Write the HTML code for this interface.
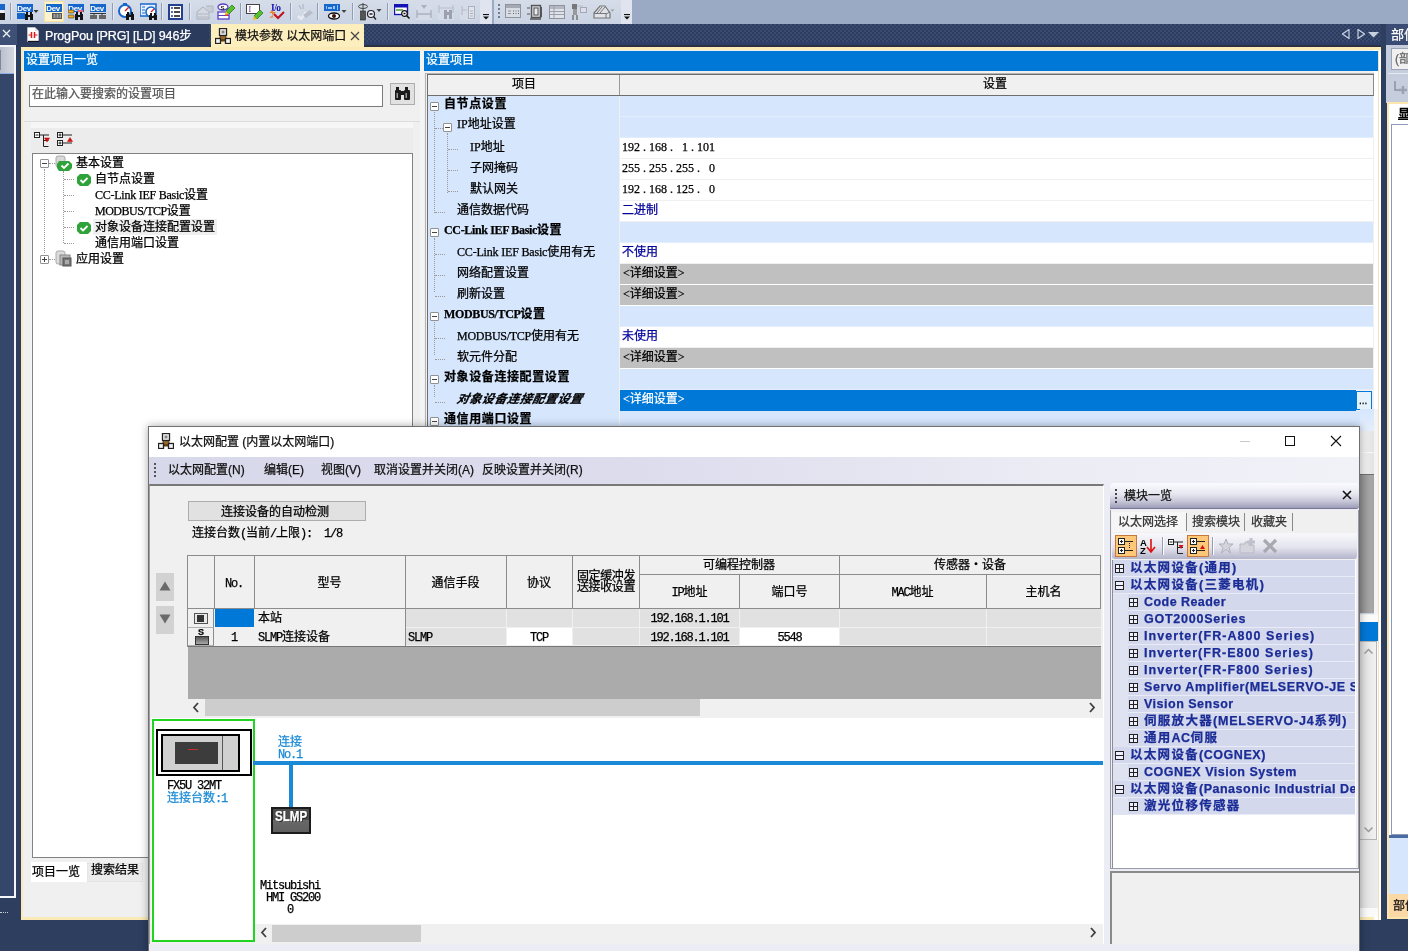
<!DOCTYPE html><html><head><meta charset="utf-8"><title>以太网配置</title><style>*{box-sizing:border-box;margin:0;padding:0}
html,body{width:1408px;height:951px;overflow:hidden}
body{position:relative;background:#2d3e5f;font-family:"Liberation Serif","Noto Sans CJK SC",serif;font-size:12px;color:#000;line-height:1}
.a{position:absolute}
.ui{font-family:"Liberation Sans","Noto Sans CJK SC",sans-serif}
.mono{font-family:"Liberation Mono","Noto Sans CJK SC",monospace}
.t{position:absolute;white-space:nowrap;line-height:14px;height:14px}
.b{font-weight:bold}
.hatch{background-color:#2c3c60;background-image:linear-gradient(45deg,#3a4b70 25%,transparent 25%,transparent 75%,#3a4b70 75%),linear-gradient(45deg,#3a4b70 25%,transparent 25%,transparent 75%,#3a4b70 75%);background-size:4px 4px;background-position:0 0,2px 2px}
.hdr{background:#0078d7;color:#fff}
.lab{background:#d5e6fd}
.gry{background:#c0c0c0}
.blu{color:#00009c}
.dots-h{border-top:1px dotted #9a9a9a;height:0}
.dots-v{border-left:1px dotted #9a9a9a;width:0}
.pm{width:9px;height:9px;border:1px solid #919191;background:#fff;border-radius:1px}
.pm:before{content:"";position:absolute;left:1px;top:3px;width:5px;height:1px;background:#444}
.pm.plus:after{content:"";position:absolute;left:3px;top:1px;width:1px;height:5px;background:#444}
.mrow{position:absolute;left:0;width:242px;height:17px;background:#d3d8ec;border-bottom:1px solid #e9ecf7}
.mt{position:absolute;white-space:nowrap;font-family:"Liberation Sans","Noto Sans CJK SC",sans-serif;font-weight:bold;color:#1b2c97;font-size:12.5px;line-height:16px;top:0;letter-spacing:0.45px}
.bx{position:absolute;width:9px;height:9px;border:1px solid #222;background:#eef}
.bx:before{content:"";position:absolute;left:0;top:3px;width:7px;height:1px;background:#222}
.bx.plus:after{content:"";position:absolute;left:3px;top:0;width:1px;height:7px;background:#222}

.cl{font-size:12px;letter-spacing:-0.35px}
.ml{letter-spacing:-1.2px}
#root{position:absolute;left:0;top:0;width:1408px;height:951px;overflow:hidden;will-change:transform;background:#2d3e5f}
.t,.mt{-webkit-text-stroke:0.25px currentColor}
</style></head><body><div id="root">
<div class="a" style="left:0;top:0;width:1408px;height:24px;background:#9aa9c4"></div>
<div class="a" style="left:0;top:0;width:492px;height:24px;background:linear-gradient(#d6dde9,#cad3e3)"></div>
<div class="a" style="left:480px;top:0;width:12px;height:24px;background:#dfe4ee"></div>
<div class="a" style="left:494px;top:0;width:138px;height:24px;background:linear-gradient(#d6dde9,#cad3e3)"></div>
<div class="a" style="left:621px;top:0;width:11px;height:24px;background:#dfe4ee"></div>
<div class="a" style="left:10px;top:3px;width:1px;height:17px;background:#8f9cb5"></div>
<div class="a" style="left:11px;top:3px;width:1px;height:17px;background:#e4e9f2"></div>
<div class="a" style="left:112px;top:3px;width:1px;height:17px;background:#8f9cb5"></div>
<div class="a" style="left:113px;top:3px;width:1px;height:17px;background:#e4e9f2"></div>
<div class="a" style="left:161px;top:3px;width:1px;height:17px;background:#8f9cb5"></div>
<div class="a" style="left:162px;top:3px;width:1px;height:17px;background:#e4e9f2"></div>
<div class="a" style="left:189px;top:3px;width:1px;height:17px;background:#8f9cb5"></div>
<div class="a" style="left:190px;top:3px;width:1px;height:17px;background:#e4e9f2"></div>
<div class="a" style="left:240px;top:3px;width:1px;height:17px;background:#8f9cb5"></div>
<div class="a" style="left:241px;top:3px;width:1px;height:17px;background:#e4e9f2"></div>
<div class="a" style="left:290px;top:3px;width:1px;height:17px;background:#8f9cb5"></div>
<div class="a" style="left:291px;top:3px;width:1px;height:17px;background:#e4e9f2"></div>
<div class="a" style="left:317px;top:3px;width:1px;height:17px;background:#8f9cb5"></div>
<div class="a" style="left:318px;top:3px;width:1px;height:17px;background:#e4e9f2"></div>
<div class="a" style="left:352px;top:3px;width:1px;height:17px;background:#8f9cb5"></div>
<div class="a" style="left:353px;top:3px;width:1px;height:17px;background:#e4e9f2"></div>
<div class="a" style="left:387px;top:3px;width:1px;height:17px;background:#8f9cb5"></div>
<div class="a" style="left:388px;top:3px;width:1px;height:17px;background:#e4e9f2"></div>
<svg class="a" style="left:0px;top:4px" width="6" height="16" viewBox="0 0 6 16"><rect x="0" y="0" width="5" height="6" fill="#1766cc"/><rect x="0" y="6" width="4" height="3" fill="#eee"/><rect x="0" y="9" width="5" height="7" fill="#1a1a1a"/></svg>
<svg class="a" style="left:17px;top:4px" width="22" height="16" viewBox="0 0 22 16"><rect x="0" y="0" width="16" height="8" fill="#1766cc"/><text x="0.3" y="7" font-family="Liberation Sans" font-weight="bold" font-size="8" fill="#fff" letter-spacing="-0.4">Dev</text><rect x="0" y="9" width="8" height="6" fill="#1766cc"/><g fill="#141414" transform="translate(8,8)"><rect x="0" y="2" width="3" height="6"/><rect x="5" y="2" width="3" height="6"/><rect x="1" y="0" width="2" height="3"/><rect x="5" y="0" width="2" height="3"/><rect x="2" y="3" width="4" height="2"/></g><path d="M16.500 6h5l-2.500 3z" fill="#333"/></svg>
<div class="a" style="left:44px;top:1px;width:20px;height:21px;background:#fdf3cf;border:1px solid #f5e1a0"></div>
<svg class="a" style="left:46px;top:4px" width="16" height="16" viewBox="0 0 16 16"><rect x="0" y="0" width="16" height="8" fill="#1766cc"/><text x="0.3" y="7" font-family="Liberation Sans" font-weight="bold" font-size="8" fill="#fff" letter-spacing="-0.4">Dev</text><rect x="6" y="9" width="10" height="6" fill="#555"/><path d="M7.500 10.500h2v1h-2zM10.500 10.500h2v1h-2zM13.500 10.500h1.500v1h-1.500zM7.500 12.500h2v1h-2zM10.500 12.500h2v1h-2zM13.500 12.500h1.500v1h-1.500z" fill="#eee"/></svg>
<svg class="a" style="left:68px;top:4px" width="16" height="16" viewBox="0 0 16 16"><rect x="0" y="0" width="16" height="8" fill="#1766cc"/><text x="0.3" y="7" font-family="Liberation Sans" font-weight="bold" font-size="8" fill="#fff" letter-spacing="-0.4">Dev</text><rect x="0" y="6" width="6" height="3" rx="1" fill="#f0b020" stroke="#333" stroke-width="0.6"/><rect x="0" y="11" width="6" height="3" rx="1" fill="#f0b020" stroke="#333" stroke-width="0.6"/><rect x="10" y="6" width="5" height="2" fill="#f06070"/><g fill="#141414" transform="translate(7,8)"><rect x="0" y="2" width="3" height="6"/><rect x="5" y="2" width="3" height="6"/><rect x="1" y="0" width="2" height="3"/><rect x="5" y="0" width="2" height="3"/><rect x="2" y="3" width="4" height="2"/></g></svg>
<svg class="a" style="left:90px;top:4px" width="16" height="16" viewBox="0 0 16 16"><rect x="0" y="0" width="16" height="8" fill="#1766cc"/><text x="0.3" y="7" font-family="Liberation Sans" font-weight="bold" font-size="8" fill="#fff" letter-spacing="-0.4">Dev</text><path d="M0 9.500h16M4 9.500v2M12 9.500v2" stroke="#333"/><rect x="0" y="11" width="7" height="4" fill="#666"/><rect x="9" y="11" width="7" height="4" fill="#666"/></svg>
<svg class="a" style="left:118px;top:3px" width="17" height="17" viewBox="0 0 17 17"><circle cx="7" cy="8" r="6" fill="#fff" stroke="#1766cc" stroke-width="2"/><rect x="5" y="0" width="4" height="2" fill="#1766cc"/><path d="M7 8l4-4" stroke="#e02020" stroke-width="1.4"/><g fill="#141414" transform="translate(8,9)"><rect x="0" y="2" width="3" height="6"/><rect x="5" y="2" width="3" height="6"/><rect x="1" y="0" width="2" height="3"/><rect x="5" y="0" width="2" height="3"/><rect x="2" y="3" width="4" height="2"/></g></svg>
<svg class="a" style="left:140px;top:3px" width="18" height="17" viewBox="0 0 18 17"><rect x="0" y="1" width="16" height="12" fill="#e8f0ff" stroke="#1766cc" stroke-width="1.5"/><path d="M2 4h3M2 7h3M2 10h3" stroke="#1766cc"/><circle cx="11" cy="9" r="5" fill="#fff" stroke="#1766cc" stroke-width="1.6"/><path d="M11 9l3-3" stroke="#e02020" stroke-width="1.3"/><g fill="#141414" transform="translate(9,10)"><rect x="0" y="2" width="3" height="6"/><rect x="5" y="2" width="3" height="6"/><rect x="1" y="0" width="2" height="3"/><rect x="5" y="0" width="2" height="3"/><rect x="2" y="3" width="4" height="2"/></g></svg>
<svg class="a" style="left:168px;top:4px" width="16" height="16" viewBox="0 0 16 16"><rect x="1" y="1" width="13" height="14" fill="#fff" stroke="#24408e" stroke-width="2"/><path d="M3 4h2M3 8h2M3 12h2" stroke="#24408e" stroke-width="1.4"/><path d="M6 4h6M6 8h6M6 12h6" stroke="#111" stroke-width="1.4"/></svg>
<svg class="a" style="left:196px;top:4px" width="18" height="16" viewBox="0 0 18 16"><path d="M1 15v-7l6-5l6 5v7z" fill="#d4d8e0" stroke="#a8aebc"/><path d="M10 2h7v6h-5" fill="#c8ccd6" stroke="#b0b6c2"/><path d="M2 10h10M2 13h10" stroke="#b0b6c2"/></svg>
<svg class="a" style="left:217px;top:3px" width="19" height="18" viewBox="0 0 19 18"><ellipse cx="6" cy="4" rx="5" ry="3" fill="#fff" stroke="#5a3ec8" stroke-width="1.3"/><text x="3.500" y="6.500" font-family="Liberation Sans" font-weight="bold" font-size="6" fill="#222">S</text><rect x="1" y="9" width="11" height="7" fill="#fff" stroke="#5a3ec8" stroke-width="1.3"/><path d="M1 12.500h11" stroke="#5a3ec8"/><path d="M8 11h3v2h-3z" fill="#e03030"/><path d="M9 8l6-6l3 3l-6 6z" fill="#58c030" stroke="#2a7a18" stroke-width="0.8"/><path d="M9 8l-1 4l4-1z" fill="#e8c020"/></svg>
<svg class="a" style="left:246px;top:4px" width="18" height="17" viewBox="0 0 18 17"><rect x="0.500" y="0.500" width="13" height="9" fill="#fff" stroke="#444"/><text x="2.500" y="8" font-family="Liberation Serif" font-size="8" fill="#5a2a8a">I</text><path d="M8 12l6-6l3 3l-6 6z" fill="#58c030" stroke="#2a7a18" stroke-width="0.8"/><path d="M8 12l-1 4l4-1z" fill="#e8c020"/></svg>
<svg class="a" style="left:268px;top:3px" width="18" height="18" viewBox="0 0 18 18"><text x="3" y="8" font-family="Liberation Serif" font-weight="bold" font-size="9.500" fill="#1010b0" letter-spacing="-0.5">I/o</text><path d="M1 10l4-3v2h3l-4 3v-2z" fill="#f08030"/><path d="M1 15l4-3v2h2" fill="#f08030"/><path d="M6 11l4 4l6-6" stroke="#c01020" stroke-width="2" fill="none"/></svg>
<svg class="a" style="left:296px;top:4px" width="18" height="16" viewBox="0 0 18 16"><path d="M3 1l2 4M7 0v5" stroke="#aab0be"/><path d="M2 12l3 3l5-7" stroke="#e8ecf2" stroke-width="2.500" fill="none"/><path d="M7 11l7-5l3 3l-7 5z" fill="#b8bdc9"/></svg>
<svg class="a" style="left:324px;top:4px" width="24" height="17" viewBox="0 0 24 17"><rect x="0" y="0" width="16" height="7" fill="#1766cc"/><path d="M2 2h1v3h-1zM4 3h4v2h-4zM9 2h2v3h-2zM13 1h1v5h-1z" fill="#9cc4ff"/><ellipse cx="10" cy="12" rx="5.500" ry="3" fill="#fff" stroke="#111" stroke-width="1.300"/><circle cx="10" cy="12" r="2" fill="#3a1010"/><path d="M17.500 6h5l-2.500 3z" fill="#444"/></svg>
<svg class="a" style="left:358px;top:3px" width="24" height="18" viewBox="0 0 24 18"><ellipse cx="5" cy="3.500" rx="4.500" ry="2" fill="none" stroke="#444"/><path d="M5 0v8" stroke="#444"/><rect x="2.500" y="8" width="5" height="9" fill="#555" stroke="#222" stroke-width="0.6"/><circle cx="13" cy="11" r="3.500" fill="#eef" stroke="#222" stroke-width="1.200"/><path d="M11.500 11h3M15.500 13.500l2.500 3" stroke="#222" stroke-width="1.300"/><path d="M18.500 6h5l-2.500 3z" fill="#444"/></svg>
<svg class="a" style="left:394px;top:4px" width="18" height="16" viewBox="0 0 18 16"><rect x="0.500" y="0.500" width="13" height="10" fill="#fff" stroke="#1414b4" stroke-width="1.400"/><rect x="0" y="0" width="14" height="3.500" fill="#1414b4"/><path d="M2 6h7" stroke="#58a040" stroke-width="1.600"/><circle cx="10.500" cy="9.500" r="2.800" fill="#fff" stroke="#111" stroke-width="1.200"/><path d="M9.500 9.500h2M12.500 11.500l3 3" stroke="#111" stroke-width="1.500"/></svg>
<svg class="a" style="left:416px;top:4px" width="16" height="16" viewBox="0 0 16 16"><rect x="0" y="0" width="16" height="16" fill="#d5dce8"/><path d="M1 6v8M15 6v8M1 10h14" stroke="#aab0be" stroke-width="1.400"/><path d="M5 1h6l-3 4z" fill="#aab0be"/></svg>
<svg class="a" style="left:438px;top:4px" width="17" height="16" viewBox="0 0 17 16"><rect x="0" y="0" width="16" height="16" fill="#d5dce8"/><path d="M1 1v8M15 1v8M1 4h14" stroke="#b8bdc9" stroke-width="1.200"/><g fill="#9aa0ae"><rect x="6" y="6" width="3" height="9"/><rect x="11" y="6" width="3" height="9"/><rect x="8" y="8" width="4" height="3"/></g></svg>
<svg class="a" style="left:460px;top:4px" width="16" height="16" viewBox="0 0 16 16"><rect x="0" y="0" width="16" height="16" fill="#d5dce8"/><path d="M2 2v9M2 6h5" stroke="#b8bdc9" stroke-width="1.200"/><rect x="8.500" y="2.500" width="6" height="12" fill="#e0e4ec" stroke="#aab0be"/><path d="M10 7h3M10 9.500h3M10 12h3" stroke="#aab0be"/></svg>
<svg class="a" style="left:483px;top:14px" width="6" height="6" viewBox="0 0 6 6"><path d="M0 0.500h6" stroke="#111" stroke-width="1.200"/><path d="M0 2.500h6l-3 3z" fill="#111"/></svg>
<svg class="a" style="left:624px;top:14px" width="6" height="6" viewBox="0 0 6 6"><path d="M0 0.500h6" stroke="#111" stroke-width="1.200"/><path d="M0 2.500h6l-3 3z" fill="#111"/></svg>
<div class="a" style="left:498px;top:4px;width:2px;height:2px;background:#6f7c96"></div>
<div class="a" style="left:498px;top:8px;width:2px;height:2px;background:#6f7c96"></div>
<div class="a" style="left:498px;top:12px;width:2px;height:2px;background:#6f7c96"></div>
<div class="a" style="left:498px;top:16px;width:2px;height:2px;background:#6f7c96"></div>
<svg class="a" style="left:505px;top:4px" width="17" height="15" viewBox="0 0 17 15"><rect x="0.500" y="0.500" width="15" height="13" fill="#d8dce4" stroke="#8e939e"/><rect x="1" y="1" width="14" height="3" fill="#a4a9b4"/><path d="M3 7h3M3 9.500h3" stroke="#8e939e"/><path d="M8 7h1M10.500 7h1M13 7h1M8 9.500h1M10.500 9.500h1M13 9.500h1" stroke="#666"/></svg>
<svg class="a" style="left:527px;top:4px" width="17" height="16" viewBox="0 0 17 16"><rect x="4.500" y="1.500" width="9" height="12" fill="#d0d4dc" stroke="#555" stroke-width="1.400"/><rect x="7" y="4" width="4" height="7" fill="#eee" stroke="#555"/><path d="M0 4h3M0 10h3M14.500 3v10" stroke="#555"/><path d="M3 15h11" stroke="#555" stroke-width="1.500"/></svg>
<svg class="a" style="left:549px;top:5px" width="16" height="14" viewBox="0 0 16 14"><rect x="0.500" y="0.500" width="15" height="13" fill="#dfe2e8" stroke="#8e939e"/><rect x="1" y="1" width="14" height="3" fill="#b4b8c2"/><path d="M1 6.500h14M1 9.500h14M5 1v12" stroke="#9a9faa"/></svg>
<svg class="a" style="left:571px;top:3px" width="18" height="17" viewBox="0 0 18 17"><rect x="1" y="1" width="5" height="5" fill="#777"/><rect x="2" y="6" width="4" height="6" fill="#999"/><path d="M2 12v5M6 12v5" stroke="#777" stroke-width="1.500"/><rect x="9.500" y="4.500" width="6" height="5" fill="#dde" stroke="#a4a9b4"/><path d="M6 3h6" stroke="#b8bdc9"/></svg>
<svg class="a" style="left:593px;top:4px" width="22" height="15" viewBox="0 0 22 15"><path d="M1 9l6-7h5l5 7v5h-16z" fill="#dfe2e8" stroke="#777" stroke-width="1.200"/><path d="M4 9l5-6M7 9l5-6M1 9.500h12v4.500" fill="none" stroke="#777"/><path d="M13 10l4-2" stroke="#777"/><path d="M17.500 5.500h4l-2 2z" fill="#999"/></svg>
<div class="a hatch" style="left:0;top:24px;width:1408px;height:18px"></div>
<div class="a" style="left:0;top:42px;width:1408px;height:4px;background:#2d3f68"></div>
<div class="a" style="left:0;top:45px;width:1408px;height:2px;background:#2a3140"></div>
<div class="a" style="left:0;top:24px;width:17px;height:21px;background:#3f5076"></div>
<svg class="a" style="left:2px;top:29px" width="9" height="9" viewBox="0 0 9 9"><path d="M1 1l7 7M8 1l-7 7" stroke="#eef1f7" stroke-width="1.300"/></svg>
<div class="a" style="left:17px;top:24px;width:192px;height:23px;background:#2b3b5e"></div>
<svg class="a" style="left:27px;top:27px" width="12" height="15" viewBox="0 0 12 15"><path d="M0.500 0.500h7.500l3.500 3.500v10.500h-11z" fill="#fff" stroke="#ddd" stroke-width="0.500"/><path d="M8 0.500v3.500h3.500" fill="#ddd"/><path d="M1.500 8h2.500M8 8h2.500" stroke="#e01818" stroke-width="1.200"/><path d="M4.500 5v6M7.500 5v6" stroke="#e01818" stroke-width="1.500"/><path d="M1 14.500h11" stroke="#111" stroke-width="1.300"/></svg>
<div class="t ui" style="left:45px;top:28px;color:#fff;font-size:12.5px;line-height:16px;letter-spacing:-0.12px">ProgPou [PRG] [LD] 946步</div>
<div class="a" style="left:211px;top:24px;width:153px;height:24px;background:#fdeebd"></div>
<svg class="a" style="left:215px;top:28px" width="16" height="16" viewBox="0 0 16 16"><path d="M4 13L6 6h4l2 7z" fill="#9a6a2a" stroke="#5a3a10"/><rect x="4.500" y="0.500" width="7" height="7" fill="#f4f4f4" stroke="#222" stroke-width="1.300"/><rect x="6.500" y="2.500" width="3" height="3" fill="#888"/><path d="M3 12h10" stroke="#5a3a10" stroke-width="1.500"/><rect x="0.500" y="10.500" width="5" height="5" fill="#f4f4f4" stroke="#222" stroke-width="1.300"/><rect x="10.500" y="10.500" width="5" height="5" fill="#f4f4f4" stroke="#222" stroke-width="1.300"/></svg>
<div class="t ui" style="left:235px;top:28px;color:#111;font-size:12px;line-height:16px">模块参数 以太网端口</div>
<svg class="a" style="left:350px;top:31px" width="10" height="10" viewBox="0 0 10 10"><path d="M1 1l8 8M9 1l-8 8" stroke="#444" stroke-width="1.200"/></svg>
<svg class="a" style="left:1342px;top:29px" width="8" height="10" viewBox="0 0 8 10"><path d="M7 0.500v9l-6.500-4.500z" fill="none" stroke="#c8d0e0" stroke-width="1.200"/></svg>
<svg class="a" style="left:1357px;top:29px" width="8" height="10" viewBox="0 0 8 10"><path d="M1 0.500v9l6.500-4.500z" fill="none" stroke="#c8d0e0" stroke-width="1.200"/></svg>
<svg class="a" style="left:1368px;top:32px" width="12" height="6" viewBox="0 0 12 6"><path d="M0 0h11l-5.500 5.500z" fill="#c8d0e0"/></svg>
<div class="a" style="left:21px;top:47px;width:1360px;height:873px;background:#f9eab6"></div>
<div class="a" style="left:23px;top:50px;width:1356px;height:867px;background:#f0f0f0"></div>
<div class="a" style="left:1374px;top:50px;width:7px;height:870px;background:#fff"></div>
<div class="a" style="left:1378px;top:50px;width:1px;height:870px;background:#f3e3bd"></div>
<div class="a" id="leftpanel" style="left:24px;top:51px;width:396px;height:866px;background:#f0f0f0">
 <div class="a hdr" style="left:0;top:0;width:396px;height:20px"></div>
 <div class="t" style="left:2px;top:2px;color:#fff;font-size:12px">设置项目一览</div>
 <div class="a" style="left:5px;top:34px;width:354px;height:22px;background:#fff;border:1px solid #7a7a7a"></div>
 <div class="t" style="left:8px;top:36px;color:#555;font-size:12px">在此输入要搜索的设置项目</div>
 <div class="a" style="left:366px;top:32px;width:25px;height:22px;background:#e1e1e1;border:1px solid #adadad"></div>
 <svg class="a" style="left:370px;top:35px" width="17" height="15" viewBox="0 0 17 15"><g fill="#1a1a1a"><rect x="2" y="1" width="3" height="4"/><rect x="11" y="1" width="3" height="4"/><rect x="1" y="4" width="6" height="10" rx="1"/><rect x="10" y="4" width="6" height="10" rx="1"/><rect x="6" y="5" width="5" height="4"/></g><rect x="2.5" y="7" width="1.5" height="5" fill="#999"/><rect x="11.5" y="7" width="1.5" height="5" fill="#999"/></svg>
 <div class="a" style="left:0;top:70px;width:396px;height:1px;background:#dcdcdc"></div>
 <div class="a" style="left:7px;top:71px;width:382px;height:718px;background:#f6f6f6"></div>
 <div class="a" style="left:7px;top:77px;width:382px;height:25px;background:#ececec"></div>
 <!-- tree toolbar icons -->
 <svg class="a" style="left:10px;top:81px" width="16" height="15" viewBox="0 0 16 15" fill="none" stroke="#222" stroke-width="1"><rect x="0.5" y="0.5" width="5" height="5" fill="#fff"/><path d="M1.5 3h3M6 3h9M9.5 3v11.5M9.5 8.5h5M9.5 14.5h5"/><path d="M10.5 6h5l-2.5 4z" fill="#d01010" stroke="#d01010" stroke-width="0.6"/></svg>
 <svg class="a" style="left:33px;top:81px" width="16" height="15" viewBox="0 0 16 15" fill="none" stroke="#222" stroke-width="1"><rect x="0.5" y="0.5" width="5" height="5" fill="#fff"/><rect x="0.5" y="8.5" width="5" height="5" fill="#fff"/><path d="M1.5 3h3M3 1.5v3M1.5 11h3M3 9.5v3M6 3h9M6 11h9"/><path d="M10.5 9.5h5l-2.5 -4z" fill="#d01010" stroke="#d01010" stroke-width="0.6"/></svg>
 <div class="a" style="left:8px;top:102px;width:381px;height:705px;background:#fff;border:1px solid #828282"></div>
 <!-- tree -->
 <div class="a dots-v" style="left:20px;top:118px;height:84px"></div>
 <div class="a dots-v" style="left:39px;top:120px;height:72px"></div>
 <div class="a dots-h" style="left:25px;top:112px;width:8px"></div>
 <div class="a dots-h" style="left:25px;top:208px;width:8px"></div>
 <div class="a pm" style="left:16px;top:108px"></div>
 <div class="a pm plus" style="left:16px;top:204px"></div>
 <div class="a dots-h" style="left:40px;top:128px;width:10px"></div>
 <div class="a dots-h" style="left:40px;top:144px;width:10px"></div>
 <div class="a dots-h" style="left:40px;top:160px;width:10px"></div>
 <div class="a dots-h" style="left:40px;top:176px;width:10px"></div>
 <div class="a dots-h" style="left:40px;top:192px;width:10px"></div>
 <!-- icons -->
 <svg class="a" style="left:31px;top:104px" width="18" height="17" viewBox="0 0 18 17"><rect x="1" y="1" width="9" height="11" rx="2" fill="#d9d9d9" stroke="#aaa"/><path d="M4 6h10l3 3v4l-3 3h-10l-2-3v-4z" fill="#2fa339"/><path d="M6.5 10.5l2.5 2.5l4.5-4.5" stroke="#fff" stroke-width="1.8" fill="none"/></svg>
 <svg class="a" style="left:53px;top:122px" width="14" height="14" viewBox="0 0 14 14"><path d="M3 1h8l3 3v6l-3 3h-8l-3-3v-6z" fill="#2fa339"/><path d="M3.5 7l2.5 2.5l4.5-4.5" stroke="#fff" stroke-width="1.8" fill="none"/></svg>
 <svg class="a" style="left:53px;top:170px" width="14" height="14" viewBox="0 0 14 14"><path d="M3 1h8l3 3v6l-3 3h-8l-3-3v-6z" fill="#2fa339"/><path d="M3.5 7l2.5 2.5l4.5-4.5" stroke="#fff" stroke-width="1.8" fill="none"/></svg>
 <svg class="a" style="left:31px;top:199px" width="18" height="18" viewBox="0 0 18 18"><rect x="1" y="1" width="9" height="13" rx="2" fill="#dcdcdc" stroke="#aaa"/><rect x="5" y="5" width="10" height="10" fill="#b8b8b8" stroke="#888"/><rect x="8" y="8" width="8" height="8" fill="#777" stroke="#555"/><rect x="10" y="10" width="4" height="4" fill="#aaa"/></svg>
 <div class="a" style="left:69px;top:168px;width:124px;height:16px;background:#efefef"></div>
 <div class="t" style="left:52px;top:105px">基本设置</div>
 <div class="t" style="left:71px;top:121px">自节点设置</div>
 <div class="t" style="left:71px;top:137px"><span style="letter-spacing:-0.25px">CC-Link IEF Basic</span>设置</div>
 <div class="t" style="left:71px;top:153px"><span style="letter-spacing:-0.5px">MODBUS/TCP</span>设置</div>
 <div class="t" style="left:71px;top:169px">对象设备连接配置设置</div>
 <div class="t" style="left:71px;top:185px">通信用端口设置</div>
 <div class="t" style="left:52px;top:201px">应用设置</div>
 <!-- bottom tabs -->
 <div class="a" style="left:7px;top:811px;width:56px;height:20px;background:#fff"></div>
 <div class="a" style="left:63px;top:812px;width:56px;height:19px;background:#ebebeb;border:1px dotted #ddd"></div>
 <div class="t" style="left:8px;top:814px;font-size:12px">项目一览</div>
 <div class="t" style="left:67px;top:812px;font-size:12px">搜索结果</div>
</div>
<!-- gap between panels -->
<div class="a" style="left:420px;top:51px;width:4px;height:866px;background:#f4f4f4"></div>

<div class="a" id="rightpanel" style="left:424px;top:51px;width:950px;height:866px;background:#f0f0f0">
<div class="a hdr" style="left:0;top:0;width:954px;height:20px"></div>
<div class="t" style="left:2px;top:2px;color:#fff;font-size:12px">设置项目</div>
<div class="a" style="left:1px;top:22px;width:949px;height:845px;border-left:1px solid #b4b4b4;border-top:1px solid #b4b4b4"></div>
<div class="a" style="left:3px;top:23px;width:947px;height:844px;border-left:1px solid #6e6e6e;border-top:1px solid #6e6e6e"></div>
<div class="a" style="left:4px;top:24px;width:946px;height:21px;background:#f0f0f0;border-bottom:1px solid #6e6e6e;border-right:1px solid #8a8a8a"></div>
<div class="a" style="left:195px;top:24px;width:1px;height:20px;background:#9a9a9a"></div>
<div class="t" style="left:88px;top:26px;font-size:12px">项目</div>
<div class="t" style="left:559px;top:26px;font-size:12px">设置</div>
<div class="a lab" style="left:4px;top:45px;width:191px;height:21px"></div>
<div class="a" style="left:196px;top:45px;width:753px;height:21px;background:#d5e6fd;border-bottom:1px solid #e2edfe"></div>
<div class="a pm" style="left:6px;top:51px"></div>
<div class="t b" style="left:20px;top:46px;letter-spacing:0.6px">自节点设置</div>
<div class="a lab" style="left:4px;top:66px;width:191px;height:21px"></div>
<div class="a" style="left:196px;top:66px;width:753px;height:21px;background:#d5e6fd;border-bottom:1px solid #e2edfe"></div>
<div class="a dots-h" style="left:11px;top:77px;width:8px"></div>
<div class="a pm" style="left:19px;top:72px"></div>
<div class="t" style="left:33px;top:66px">IP地址设置</div>
<div class="a lab" style="left:4px;top:87px;width:191px;height:21px"></div>
<div class="a" style="left:196px;top:87px;width:753px;height:21px;background:#fff;border-bottom:1px solid #f0f0f0"></div>
<div class="t" style="left:198px;top:89px;color:#000">192 . 168 .&nbsp;&nbsp;&nbsp;1 . 101</div>
<div class="a dots-h" style="left:24px;top:98px;width:10px"></div>
<div class="t" style="left:46px;top:89px">IP地址</div>
<div class="a lab" style="left:4px;top:108px;width:191px;height:21px"></div>
<div class="a" style="left:196px;top:108px;width:753px;height:21px;background:#fff;border-bottom:1px solid #f0f0f0"></div>
<div class="t" style="left:198px;top:110px;color:#000">255 . 255 . 255 .&nbsp;&nbsp;&nbsp;0</div>
<div class="a dots-h" style="left:24px;top:119px;width:10px"></div>
<div class="t" style="left:46px;top:110px">子网掩码</div>
<div class="a lab" style="left:4px;top:129px;width:191px;height:21px"></div>
<div class="a" style="left:196px;top:129px;width:753px;height:21px;background:#fff;border-bottom:1px solid #f0f0f0"></div>
<div class="t" style="left:198px;top:131px;color:#000">192 . 168 . 125 .&nbsp;&nbsp;&nbsp;0</div>
<div class="a dots-h" style="left:24px;top:140px;width:10px"></div>
<div class="t" style="left:46px;top:131px">默认网关</div>
<div class="a lab" style="left:4px;top:150px;width:191px;height:21px"></div>
<div class="a" style="left:196px;top:150px;width:753px;height:21px;background:#fff;border-bottom:1px solid #f0f0f0"></div>
<div class="t" style="left:198px;top:152px;color:#00009c">二进制</div>
<div class="a dots-h" style="left:11px;top:161px;width:10px"></div>
<div class="t" style="left:33px;top:152px">通信数据代码</div>
<div class="a lab" style="left:4px;top:171px;width:191px;height:21px"></div>
<div class="a" style="left:196px;top:171px;width:753px;height:21px;background:#d5e6fd;border-bottom:1px solid #e2edfe"></div>
<div class="a pm" style="left:6px;top:177px"></div>
<div class="t b" style="left:20px;top:172px;letter-spacing:0.6px"><span class="cl">CC-Link IEF Basic</span>设置</div>
<div class="a lab" style="left:4px;top:192px;width:191px;height:21px"></div>
<div class="a" style="left:196px;top:192px;width:753px;height:21px;background:#fff;border-bottom:1px solid #f0f0f0"></div>
<div class="t" style="left:198px;top:194px;color:#00009c">不使用</div>
<div class="a dots-h" style="left:11px;top:203px;width:10px"></div>
<div class="t" style="left:33px;top:194px"><span style="letter-spacing:-0.18px">CC-Link IEF Basic</span>使用有无</div>
<div class="a lab" style="left:4px;top:213px;width:191px;height:21px"></div>
<div class="a" style="left:196px;top:213px;width:753px;height:21px;background:#c0c0c0;border-bottom:1px solid #fff"></div>
<div class="t" style="left:199px;top:215px;color:#000">&lt;详细设置&gt;</div>
<div class="a dots-h" style="left:11px;top:224px;width:10px"></div>
<div class="t" style="left:33px;top:215px">网络配置设置</div>
<div class="a lab" style="left:4px;top:234px;width:191px;height:21px"></div>
<div class="a" style="left:196px;top:234px;width:753px;height:21px;background:#c0c0c0;border-bottom:1px solid #fff"></div>
<div class="t" style="left:199px;top:236px;color:#000">&lt;详细设置&gt;</div>
<div class="a dots-h" style="left:11px;top:245px;width:10px"></div>
<div class="t" style="left:33px;top:236px">刷新设置</div>
<div class="a lab" style="left:4px;top:255px;width:191px;height:21px"></div>
<div class="a" style="left:196px;top:255px;width:753px;height:21px;background:#d5e6fd;border-bottom:1px solid #e2edfe"></div>
<div class="a pm" style="left:6px;top:261px"></div>
<div class="t b" style="left:20px;top:256px;letter-spacing:0.6px"><span class="cl">MODBUS/TCP</span>设置</div>
<div class="a lab" style="left:4px;top:276px;width:191px;height:21px"></div>
<div class="a" style="left:196px;top:276px;width:753px;height:21px;background:#fff;border-bottom:1px solid #f0f0f0"></div>
<div class="t" style="left:198px;top:278px;color:#00009c">未使用</div>
<div class="a dots-h" style="left:11px;top:287px;width:10px"></div>
<div class="t" style="left:33px;top:278px"><span style="letter-spacing:-0.28px">MODBUS/TCP</span>使用有无</div>
<div class="a lab" style="left:4px;top:297px;width:191px;height:21px"></div>
<div class="a" style="left:196px;top:297px;width:753px;height:21px;background:#c0c0c0;border-bottom:1px solid #fff"></div>
<div class="t" style="left:199px;top:299px;color:#000">&lt;详细设置&gt;</div>
<div class="a dots-h" style="left:11px;top:308px;width:10px"></div>
<div class="t" style="left:33px;top:299px">软元件分配</div>
<div class="a lab" style="left:4px;top:318px;width:191px;height:21px"></div>
<div class="a" style="left:196px;top:318px;width:753px;height:21px;background:#d5e6fd;border-bottom:1px solid #e2edfe"></div>
<div class="a pm" style="left:6px;top:324px"></div>
<div class="t b" style="left:20px;top:319px;letter-spacing:0.6px">对象设备连接配置设置</div>
<div class="a lab" style="left:4px;top:339px;width:191px;height:21px"></div>
<div class="a" style="left:196px;top:339px;width:736px;height:21px;background:#0078d7;border-bottom:1px solid #0078d7"></div>
<div class="t" style="left:199px;top:341px;color:#fff">&lt;详细设置&gt;</div>
<div class="a dots-h" style="left:11px;top:351px;width:10px"></div>
<div class="t b" style="left:33px;top:341px;font-style:italic;letter-spacing:0.6px;transform:skewX(-12deg)">对象设备连接配置设置</div>
<div class="a lab" style="left:4px;top:360px;width:191px;height:21px"></div>
<div class="a" style="left:196px;top:360px;width:753px;height:21px;background:#d5e6fd;border-bottom:1px solid #e2edfe"></div>
<div class="a pm" style="left:6px;top:366px"></div>
<div class="t b" style="left:20px;top:361px;letter-spacing:0.6px">通信用端口设置</div>
<div class="a lab" style="left:4px;top:381px;width:191px;height:21px"></div>
<div class="a" style="left:196px;top:381px;width:753px;height:21px;background:#fff;border-bottom:1px solid #f0f0f0"></div>
<div class="a lab" style="left:4px;top:402px;width:191px;height:21px"></div>
<div class="a" style="left:196px;top:402px;width:753px;height:21px;background:#fff;border-bottom:1px solid #f0f0f0"></div>
<div class="a dots-v" style="left:10px;top:61px;height:101px"></div>
<div class="a dots-v" style="left:23px;top:82px;height:60px"></div>
<div class="a dots-v" style="left:10px;top:187px;height:54px"></div>
<div class="a dots-v" style="left:10px;top:271px;height:33px"></div>
<div class="a dots-v" style="left:10px;top:334px;height:12px"></div>
<div class="a" style="left:932px;top:340px;width:16px;height:19px;background:#e5f1fb;border:1px solid #0078d7"></div>
<div class="t ui" style="left:935px;top:343px;font-size:10px">...</div>
</div>
<!-- left sidebar -->
<div class="a" style="left:0;top:45px;width:16px;height:853px;background:#f4f6fa"></div>
<div class="a" style="left:0;top:47px;width:14px;height:26px;background:linear-gradient(90deg,#b9bfcd,#d3d7e1)"></div>
<div class="a" style="left:0;top:50px;width:1px;height:20px;background:#7f889b"></div>
<div class="a" style="left:0;top:73px;width:14px;height:1px;background:#8eb0e4"></div>
<div class="a" style="left:0;top:74px;width:14px;height:822px;background:#34476b"></div>
<div class="a" style="left:0;top:912px;width:8px;height:1px;border-top:1px dotted #c8cede"></div>
<!-- right: behind dialog strip (main window scroll etc) x1360..1378 -->
<div class="a" style="left:1360px;top:409px;width:14px;height:22px;background:linear-gradient(#d5e6fd,#e4eefb)"></div>
<div class="a" style="left:1360px;top:431px;width:14px;height:43px;background:linear-gradient(90deg,#f4f4f4,#e2e2e2)"></div>
<div class="a" style="left:1360px;top:452px;width:14px;height:1px;background:#f8f8f8"></div>
<div class="a" style="left:1360px;top:474px;width:17px;height:140px;background:linear-gradient(90deg,#8f8f8f,#a6a6a6 60%,#a0a0a0);border-top:1px solid #6e6e6e;border-bottom:1px solid #c8d4e4"></div>
<div class="a" style="left:1374px;top:409px;width:4px;height:206px;background:#f4f4f4"></div>
<div class="a" style="left:1360px;top:615px;width:18px;height:7px;background:#fafafa"></div>
<div class="a" style="left:1360px;top:622px;width:18px;height:19px;background:#0078d7"></div>
<div class="a" style="left:1360px;top:641px;width:17px;height:199px;background:linear-gradient(90deg,#dcdcdc,#f2f2f2);border:1px solid #b4b4b4;border-left:none"></div>
<svg class="a" style="left:1364px;top:648px" width="9" height="6" viewBox="0 0 9 6"><path d="M0.5 5.500l4-4l4 4" stroke="#9a9a9a" stroke-width="1.5" fill="none"/></svg>
<svg class="a" style="left:1364px;top:827px" width="9" height="6" viewBox="0 0 9 6"><path d="M0.5 0.500l4 4l4-4" stroke="#9a9a9a" stroke-width="1.5" fill="none"/></svg>
<div class="a" style="left:1360px;top:840px;width:18px;height:77px;background:linear-gradient(90deg,#e0e0e0,#ececec)"></div>
<div class="a" style="left:1360px;top:908px;width:18px;height:9px;background:#fafafa"></div>
<!-- right navy gap and 部件 panel -->
<div class="a" style="left:1381px;top:24px;width:27px;height:927px;background:#2d3e5f"></div>
<div class="a" style="left:1386px;top:24px;width:22px;height:21px;background:#3a4c74"></div>
<div class="t ui" style="left:1391px;top:27px;color:#fff;font-size:13px;line-height:16px">部件</div>
<div class="a" style="left:1386px;top:45px;width:22px;height:58px;background:#c6cedd"></div>
<div class="a" style="left:1391px;top:48px;width:20px;height:22px;background:#f0f0f0;border:1px solid #9aa4b8"></div>
<div class="t ui" style="left:1395px;top:52px;color:#666;font-size:12px">(部</div>
<div class="a" style="left:1388px;top:73px;width:20px;height:1px;background:#e4e8f0"></div>
<svg class="a" style="left:1394px;top:80px" width="14" height="16" viewBox="0 0 14 16"><path d="M1 1v9h7" stroke="#8a93a6" stroke-width="1.5" fill="none"/><path d="M9 6v8M5 10h8" stroke="#9aa2b4" stroke-width="2.5"/></svg>
<div class="a" style="left:1387px;top:102px;width:21px;height:817px;background:#fff;border:2px solid #fbe6ae;border-right:none"></div>
<div class="a" style="left:1389px;top:104px;width:19px;height:20px;background:#fff"></div>
<div class="t ui" style="left:1398px;top:107px;color:#000;font-size:12px;font-weight:bold;text-decoration:underline">显</div>
<div class="a" style="left:1391px;top:124px;width:17px;height:711px;background:#fff;border:1px solid #8c9ab8;border-right:none"></div>
<div class="a" style="left:1389px;top:835px;width:19px;height:3px;background:#4a6aa4"></div>
<div class="a" style="left:1389px;top:838px;width:19px;height:56px;background:#d5e6fd"></div>
<div class="a" style="left:1389px;top:894px;width:19px;height:23px;background:#fbd9a6"></div>
<div class="t ui" style="left:1393px;top:899px;color:#111;font-size:12px">部件</div>

<div class="a ui" id="dlg" style="left:148px;top:426px;width:1212px;height:531px;background:#ececf4;border:1px solid #707070;box-shadow:0 0 8px rgba(0,0,0,.35)">
<div class="a" style="left:0px;top:0px;width:1210px;height:30px;background:#fff"></div>
<svg class="a" style="left:9px;top:6px" width="16" height="16" viewBox="0 0 16 16"><path d="M4 13L6 6h4l2 7z" fill="#9a6a2a" stroke="#5a3a10"/><rect x="4.500" y="0.500" width="7" height="7" fill="#f4f4f4" stroke="#222" stroke-width="1.300"/><rect x="6.500" y="2.500" width="3" height="3" fill="#888"/><path d="M3 12h10" stroke="#5a3a10" stroke-width="1.500"/><rect x="0.500" y="10.500" width="5" height="5" fill="#f4f4f4" stroke="#222" stroke-width="1.300"/><rect x="10.500" y="10.500" width="5" height="5" fill="#f4f4f4" stroke="#222" stroke-width="1.300"/></svg>
<div class="t ui" style="left:30px;top:8px;font-size:12px;color:#111">以太网配置 (内置以太网端口)</div>
<div class="a" style="left:1091px;top:14px;width:10px;height:1px;background:#c8c8c8"></div>
<div class="a" style="left:1136px;top:9px;width:10px;height:10px;border:1px solid #111"></div>
<svg class="a" style="left:1181px;top:8px" width="12" height="12" viewBox="0 0 12 12"><path d="M1 1l10 10M11 1L1 11" stroke="#111" stroke-width="1.1"/></svg>
<div class="a" style="left:0px;top:30px;width:1210px;height:27px;background:linear-gradient(90deg,#d7d8ea 0%,#dcdced 40%,#ececf5 75%,#f1f1f8 100%)"></div>
<div class="a" style="left:5px;top:36px;width:2px;height:2px;background:#555"></div>
<div class="a" style="left:5px;top:40px;width:2px;height:2px;background:#555"></div>
<div class="a" style="left:5px;top:44px;width:2px;height:2px;background:#555"></div>
<div class="a" style="left:5px;top:48px;width:2px;height:2px;background:#555"></div>
<div class="t ui" style="left:19px;top:36px;font-size:12px;color:#111">以太网配置(N)</div>
<div class="t ui" style="left:115px;top:36px;font-size:12px;color:#111">编辑(E)</div>
<div class="t ui" style="left:172px;top:36px;font-size:12px;color:#111">视图(V)</div>
<div class="t ui" style="left:225px;top:36px;font-size:12px;color:#111">取消设置并关闭(A)</div>
<div class="t ui" style="left:333px;top:36px;font-size:12px;color:#111">反映设置并关闭(R)</div>
<div class="a" style="left:0px;top:57px;width:955px;height:460px;background:#f0f0f0;border-top:2px solid #787878;border-left:1px solid #a0a0a0;border-right:1px solid #fff"></div>
<div class="a" style="left:39px;top:74px;width:178px;height:20px;background:#e1e1e1;border:1px solid #adadad"></div>
<div class="t mono" style="left:72px;top:79px;font-size:12px">连接设备的自动检测</div>
<div class="t mono" style="left:43px;top:100px;font-size:12px">连接台数<span class="ml">(</span>当前<span class="ml">/</span>上限<span class="ml">):&nbsp;&nbsp;1/8</span></div>
<div class="a" style="left:7px;top:146px;width:18px;height:28px;background:#d2d2d2"></div>
<div class="a" style="left:7px;top:179px;width:18px;height:28px;background:#d2d2d2"></div>
<svg class="a" style="left:10px;top:154px" width="12" height="10" viewBox="0 0 12 10"><path d="M6 0.500l5.500 9H0.500z" fill="#6a6a6a"/></svg>
<svg class="a" style="left:10px;top:187px" width="12" height="10" viewBox="0 0 12 10"><path d="M6 9.500l5.500-9H0.500z" fill="#6a6a6a"/></svg>
<div class="a" style="left:38px;top:128px;width:914px;height:54px;background:#f0f0f0;border:1px solid #8c8c8c"></div>
<div class="a" style="left:65px;top:128px;width:1px;height:54px;background:#8c8c8c"></div>
<div class="a" style="left:105px;top:128px;width:1px;height:54px;background:#8c8c8c"></div>
<div class="a" style="left:256px;top:128px;width:1px;height:54px;background:#8c8c8c"></div>
<div class="a" style="left:357px;top:128px;width:1px;height:54px;background:#8c8c8c"></div>
<div class="a" style="left:423px;top:128px;width:1px;height:54px;background:#8c8c8c"></div>
<div class="a" style="left:490px;top:128px;width:1px;height:54px;background:#8c8c8c"></div>
<div class="a" style="left:690px;top:128px;width:1px;height:54px;background:#8c8c8c"></div>
<div class="a" style="left:490px;top:147px;width:462px;height:1px;background:#8c8c8c"></div>
<div class="a" style="left:590px;top:147px;width:1px;height:35px;background:#8c8c8c"></div>
<div class="a" style="left:837px;top:147px;width:1px;height:35px;background:#8c8c8c"></div>
<div class="t mono" style="left:65px;top:150px;width:40px;text-align:center;font-size:12px"><span class="ml">No.</span></div>
<div class="t mono" style="left:105px;top:150px;width:151px;text-align:center;font-size:12px">型号</div>
<div class="t mono" style="left:256px;top:150px;width:101px;text-align:center;font-size:12px">通信手段</div>
<div class="t mono" style="left:357px;top:150px;width:66px;text-align:center;font-size:12px">协议</div>
<div class="t mono" style="left:424px;top:145px;width:66px;text-align:center;font-size:12px;letter-spacing:-0.4px;line-height:11px;height:22px;white-space:normal">固定缓冲发<br>送接收设置</div>
<div class="t mono" style="left:490px;top:132px;width:200px;text-align:center;font-size:12px">可编程控制器</div>
<div class="t mono" style="left:690px;top:132px;width:262px;text-align:center;font-size:12px">传感器・设备</div>
<div class="t mono" style="left:490px;top:159px;width:101px;text-align:center;font-size:12px"><span class="ml">IP</span>地址</div>
<div class="t mono" style="left:591px;top:159px;width:99px;text-align:center;font-size:12px">端口号</div>
<div class="t mono" style="left:690px;top:159px;width:147px;text-align:center;font-size:12px"><span class="ml">MAC</span>地址</div>
<div class="t mono" style="left:837px;top:159px;width:115px;text-align:center;font-size:12px">主机名</div>
<div class="a" style="left:39px;top:182px;width:26px;height:19px;background:#f0f0f0;border-bottom:1px solid #b0b0b0;border-right:1px solid #8c8c8c"></div>
<div class="a" style="left:66px;top:182px;width:39px;height:18px;background:#0078d7"></div>
<div class="a" style="left:106px;top:182px;width:150px;height:18px;background:#f0f0f0"></div>
<div class="a" style="left:257px;top:182px;width:100px;height:18px;background:#e1e1e1"></div>
<div class="a" style="left:358px;top:182px;width:65px;height:18px;background:#e1e1e1"></div>
<div class="a" style="left:424px;top:182px;width:66px;height:18px;background:#e1e1e1"></div>
<div class="a" style="left:491px;top:182px;width:99px;height:18px;background:#e1e1e1"></div>
<div class="a" style="left:591px;top:182px;width:99px;height:18px;background:#e1e1e1"></div>
<div class="a" style="left:691px;top:182px;width:146px;height:18px;background:#e1e1e1"></div>
<div class="a" style="left:838px;top:182px;width:114px;height:18px;background:#e1e1e1"></div>
<div class="a" style="left:256px;top:182px;width:1px;height:19px;background:#8c8c8c"></div>
<div class="a" style="left:39px;top:201px;width:26px;height:18px;background:#f0f0f0;border-bottom:1px solid #b0b0b0;border-right:1px solid #8c8c8c"></div>
<div class="a" style="left:66px;top:201px;width:39px;height:17px;background:#f0f0f0"></div>
<div class="a" style="left:106px;top:201px;width:150px;height:17px;background:#f0f0f0"></div>
<div class="a" style="left:257px;top:201px;width:100px;height:17px;background:#e1e1e1"></div>
<div class="a" style="left:358px;top:201px;width:65px;height:17px;background:#fff"></div>
<div class="a" style="left:424px;top:201px;width:66px;height:17px;background:#e1e1e1"></div>
<div class="a" style="left:491px;top:201px;width:99px;height:17px;background:#e1e1e1"></div>
<div class="a" style="left:591px;top:201px;width:99px;height:17px;background:#fff"></div>
<div class="a" style="left:691px;top:201px;width:146px;height:17px;background:#e1e1e1"></div>
<div class="a" style="left:838px;top:201px;width:114px;height:17px;background:#e1e1e1"></div>
<div class="a" style="left:256px;top:201px;width:1px;height:18px;background:#8c8c8c"></div>
<div class="a" style="left:38px;top:219px;width:914px;height:1px;background:#777"></div>
<div class="a" style="left:38px;top:182px;width:1px;height:38px;background:#8c8c8c"></div>
<div class="t mono" style="left:109px;top:185px;font-size:12px">本站</div>
<div class="t mono" style="left:65px;top:204px;width:40px;text-align:center;font-size:12px"><span class="ml">1</span></div>
<div class="t mono" style="left:109px;top:204px;font-size:12px"><span class="ml">SLMP</span>连接设备</div>
<div class="t mono" style="left:259px;top:204px;font-size:12px"><span class="ml">SLMP</span></div>
<div class="t mono" style="left:357px;top:204px;width:66px;text-align:center;font-size:12px"><span class="ml">TCP</span></div>
<div class="t mono" style="left:490px;top:185px;width:101px;text-align:center;font-size:12px"><span class="ml">192.168.1.101</span></div>
<div class="t mono" style="left:490px;top:204px;width:101px;text-align:center;font-size:12px"><span class="ml">192.168.1.101</span></div>
<div class="t mono" style="left:591px;top:204px;width:99px;text-align:center;font-size:12px"><span class="ml">5548</span></div>
<div class="a" style="left:45px;top:186px;width:14px;height:11px;border:1px solid #555;background:#e8e8e8"></div>
<div class="a" style="left:48px;top:188px;width:7px;height:7px;background:#333"></div>
<div class="t ui" style="left:49px;top:200px;font-size:9px;font-weight:bold;line-height:10px">S</div>
<div class="a" style="left:46px;top:209px;width:14px;height:9px;background:linear-gradient(#555,#aaa);border:1px solid #333"></div>
<div class="a" style="left:39px;top:220px;width:913px;height:52px;background:#ababab"></div>
<div class="a" style="left:39px;top:272px;width:913px;height:17px;background:#f0f0f0"></div>
<div class="a" style="left:56px;top:272px;width:495px;height:17px;background:#cdcdcd"></div>
<svg class="a" style="left:43px;top:275px" width="8" height="11" viewBox="0 0 8 11"><path d="M6 1L2 5.500L6 10" stroke="#404040" stroke-width="1.800" fill="none"/></svg>
<svg class="a" style="left:939px;top:275px" width="8" height="11" viewBox="0 0 8 11"><path d="M2 1L6 5.500L2 10" stroke="#404040" stroke-width="1.800" fill="none"/></svg>
<div class="a" style="left:2px;top:291px;width:952px;height:206px;background:#fff"></div>
<div class="a" style="left:3px;top:292px;width:103px;height:223px;background:#fff;border:2px solid #22d422"></div>
<div class="a" style="left:7px;top:302px;width:96px;height:47px;border:2px solid #000;background:#fff"></div>
<div class="a" style="left:12px;top:307px;width:79px;height:38px;border:2px solid #000;background:#d0d0d0"></div>
<div class="a" style="left:26px;top:315px;width:43px;height:22px;background:#3c3c3c"></div>
<div class="a" style="left:39px;top:322px;width:10px;height:1px;background:#c03030"></div>
<div class="a" style="left:73px;top:309px;width:1px;height:34px;background:#555"></div>
<div class="a" style="left:104px;top:334px;width:850px;height:4px;background:#1a8ad6"></div>
<div class="a" style="left:140px;top:338px;width:4px;height:43px;background:#1a8ad6"></div>
<div class="a" style="left:122px;top:380px;width:40px;height:27px;background:linear-gradient(#4c4c4c 0%,#4c4c4c 50%,#686868 50%,#606060 100%);border:2px solid #1c1c1c"></div>
<div class="t ui" style="left:126px;top:381px;font-size:14px;font-weight:bold;color:#fff;line-height:16px;transform:scaleX(0.83);transform-origin:0 0;text-shadow:1px 1px 0 #222">SLMP</div>
<div class="t mono" style="left:129px;top:309px;font-size:12px;color:#1a8ad6">连接</div>
<div class="t mono" style="left:129px;top:321px;font-size:12px;color:#1a8ad6"><span class="ml">No.1</span></div>
<div class="t mono" style="left:18px;top:352px;font-size:12px"><span class="ml">FX5U 32MT</span></div>
<div class="t mono" style="left:18px;top:365px;font-size:12px;color:#1a8ad6">连接台数<span class="ml">:1</span></div>
<div class="t mono" style="left:111px;top:452px;font-size:12px"><span class="ml">Mitsubishi</span></div>
<div class="t mono" style="left:117px;top:464px;font-size:12px"><span class="ml">HMI GS200</span></div>
<div class="t mono" style="left:138px;top:476px;font-size:12px"><span class="ml">0</span></div>
<div class="a" style="left:107px;top:497px;width:847px;height:19px;background:#f0f0f0"></div>
<div class="a" style="left:123px;top:498px;width:149px;height:17px;background:#cdcdcd"></div>
<svg class="a" style="left:111px;top:500px" width="8" height="11" viewBox="0 0 8 11"><path d="M6 1L2 5.500L6 10" stroke="#404040" stroke-width="1.800" fill="none"/></svg>
<svg class="a" style="left:940px;top:500px" width="8" height="11" viewBox="0 0 8 11"><path d="M2 1L6 5.500L2 10" stroke="#404040" stroke-width="1.800" fill="none"/></svg>
<div class="a" style="left:955px;top:57px;width:6px;height:460px;background:#ececf4"></div>
<div class="a" style="left:961px;top:56px;width:249px;height:26px;background:linear-gradient(#fbfbff 0%,#e6e6f0 45%,#c4c4d6 75%,#9c9cb8 100%);border-radius:4px 4px 3px 0;border-bottom:1px solid #77779a"></div>
<div class="a" style="left:966px;top:62px;width:2px;height:2px;background:#444"></div>
<div class="a" style="left:966px;top:66px;width:2px;height:2px;background:#444"></div>
<div class="a" style="left:966px;top:70px;width:2px;height:2px;background:#444"></div>
<div class="a" style="left:966px;top:74px;width:2px;height:2px;background:#444"></div>
<div class="t ui" style="left:975px;top:62px;font-size:12px;color:#111">模块一览</div>
<svg class="a" style="left:1193px;top:63px" width="10" height="10" viewBox="0 0 10 10"><path d="M1 1l8 8M9 1L1 9" stroke="#111" stroke-width="1.6"/></svg>
<div class="a" style="left:961px;top:83px;width:249px;height:359px;background:#f0f0f0;border:1px solid #9a9aa8;border-top:none"></div>
<div class="a" style="left:963px;top:85px;width:74px;height:20px;background:#f6f6f6"></div>
<div class="a" style="left:1037px;top:86px;width:1px;height:18px;background:#888"></div>
<div class="a" style="left:1095px;top:86px;width:1px;height:18px;background:#888"></div>
<div class="a" style="left:1143px;top:86px;width:1px;height:18px;background:#888"></div>
<div class="t ui" style="left:969px;top:88px;font-size:12px;color:#333">以太网选择</div>
<div class="t ui" style="left:1043px;top:88px;font-size:12px;color:#333">搜索模块</div>
<div class="t ui" style="left:1102px;top:88px;font-size:12px;color:#333">收藏夹</div>
<div class="a" style="left:963px;top:106px;width:245px;height:26px;background:linear-gradient(#f8f8fc 0%,#e4e4ee 55%,#b4b4cc 100%);border-radius:0 0 3px 3px"></div>
<div class="a" style="left:966px;top:108px;width:22px;height:22px;background:#ffc878;border:1px solid #c8783c"></div>
<div class="a" style="left:1038px;top:108px;width:22px;height:22px;background:#ffc878;border:1px solid #c8783c"></div>
<div class="a" style="left:1013px;top:110px;width:1px;height:18px;background:#fff;border-left:1px solid #9a9ab0;width:2px"></div>
<div class="a" style="left:1063px;top:110px;width:1px;height:18px;background:#fff;border-left:1px solid #9a9ab0;width:2px"></div>
<svg class="a" style="left:969px;top:111px" width="16" height="16" viewBox="0 0 16 16"><g fill="#fff" stroke="#222"><rect x="0.5" y="0.5" width="6" height="6"/><rect x="0.5" y="9.5" width="6" height="6"/></g><path d="M2 3.5h3M3.5 2v3M2 12.500h3M3.5 11v3M7 3.500h8M7 12.500h8" stroke="#222" fill="none"/><path d="M11.5 5v6" stroke="#222" stroke-dasharray="1 1"/></svg>
<svg class="a" style="left:991px;top:111px" width="16" height="16" viewBox="0 0 16 16"><text x="0" y="7.500" font-family="Liberation Sans" font-weight="bold" font-size="9.500" fill="#000">A</text><text x="0" y="15.500" font-family="Liberation Sans" font-weight="bold" font-size="9.500" fill="#000">Z</text><path d="M11 1v12M7 9l4 5l4-5" stroke="#e01010" stroke-width="1.6" fill="none"/></svg>
<svg class="a" style="left:1019px;top:111px" width="16" height="16" viewBox="0 0 16 16"><rect x="0.5" y="1.5" width="5" height="5" fill="#fff" stroke="#222"/><path d="M1.5 4h3M6 4h9M9.5 4v11.500M9.500 9.500h5.500M9.500 15.500h5.500" stroke="#222" fill="none"/><path d="M10.500 7h5l-2.500 4z" fill="#d01010"/></svg>
<svg class="a" style="left:1041px;top:111px" width="16" height="16" viewBox="0 0 16 16"><g fill="#fff" stroke="#222"><rect x="0.5" y="0.5" width="6" height="6"/><rect x="0.5" y="9.5" width="6" height="6"/></g><path d="M2 3.5h3M3.5 2v3M2 12.500h3M3.5 11v3M7 3.500h8M7 12.500h8" stroke="#222" fill="none"/><path d="M10 11h5l-2.500-4z" fill="#d01010"/></svg>
<svg class="a" style="left:1069px;top:111px" width="16" height="16" viewBox="0 0 16 16"><path d="M8 1l2 5h5l-4 3.500l1.500 5.500l-4.500-3.500l-4.500 3.500l1.500-5.500l-4-3.500h5z" fill="#d4d4dc" stroke="#b0b0bc"/></svg>
<svg class="a" style="left:1090px;top:111px" width="18" height="16" viewBox="0 0 18 16"><path d="M1 6h5v-2h4v3h5v8h-14z" fill="#d4d4dc" stroke="#b8b8c4"/><path d="M12 0v8M8 4h8" stroke="#c0c0cc" stroke-width="3"/></svg>
<svg class="a" style="left:1113px;top:111px" width="16" height="16" viewBox="0 0 16 16"><path d="M2 2l12 12M14 2L2 14" stroke="#a8a8b0" stroke-width="3.2"/></svg>
<div class="a" style="left:963px;top:133px;width:244px;height:308px;background:#fff;border-left:1px solid #8c8c9c"></div>
<div class="a" style="left:964px;top:133px;width:242px;height:307px;overflow:hidden">
<div class="mrow" style="top:0px">
<div class="bx plus" style="left:2px;top:4px"></div>
<div class="mt" id="m0" style="left:17px;letter-spacing:1.25px"><span style="letter-spacing:1.3px">以太网设备</span>(<span style="letter-spacing:1.3px">通用</span>)</div>
</div>
<div class="mrow" style="top:17px">
<div class="bx " style="left:2px;top:4px"></div>
<div class="mt" id="m1" style="left:17px;letter-spacing:1.25px"><span style="letter-spacing:1.3px">以太网设备</span>(<span style="letter-spacing:1.3px">三菱电机</span>)</div>
</div>
<div class="mrow" style="top:34px">
<div class="a" style="left:0;top:0;width:15px;height:17px;background:#dfe2f1"></div>
<div class="bx plus" style="left:16px;top:4px"></div>
<div class="mt" id="m2" style="left:31px;letter-spacing:0.45px">Code Reader</div>
</div>
<div class="mrow" style="top:51px">
<div class="a" style="left:0;top:0;width:15px;height:17px;background:#dfe2f1"></div>
<div class="bx plus" style="left:16px;top:4px"></div>
<div class="mt" id="m3" style="left:31px;letter-spacing:0.75px">GOT2000Series</div>
</div>
<div class="mrow" style="top:68px">
<div class="a" style="left:0;top:0;width:15px;height:17px;background:#dfe2f1"></div>
<div class="bx plus" style="left:16px;top:4px"></div>
<div class="mt" id="m4" style="left:31px;letter-spacing:1.05px">Inverter(FR-A800 Series)</div>
</div>
<div class="mrow" style="top:85px">
<div class="a" style="left:0;top:0;width:15px;height:17px;background:#dfe2f1"></div>
<div class="bx plus" style="left:16px;top:4px"></div>
<div class="mt" id="m5" style="left:31px;letter-spacing:1.03px">Inverter(FR-E800 Series)</div>
</div>
<div class="mrow" style="top:102px">
<div class="a" style="left:0;top:0;width:15px;height:17px;background:#dfe2f1"></div>
<div class="bx plus" style="left:16px;top:4px"></div>
<div class="mt" id="m6" style="left:31px;letter-spacing:1.05px">Inverter(FR-F800 Series)</div>
</div>
<div class="mrow" style="top:119px">
<div class="a" style="left:0;top:0;width:15px;height:17px;background:#dfe2f1"></div>
<div class="bx plus" style="left:16px;top:4px"></div>
<div class="mt" id="m7" style="left:31px;letter-spacing:0.6px">Servo Amplifier(MELSERVO-JE Series)</div>
</div>
<div class="mrow" style="top:136px">
<div class="a" style="left:0;top:0;width:15px;height:17px;background:#dfe2f1"></div>
<div class="bx plus" style="left:16px;top:4px"></div>
<div class="mt" id="m8" style="left:31px;letter-spacing:0.5px">Vision Sensor</div>
</div>
<div class="mrow" style="top:153px">
<div class="a" style="left:0;top:0;width:15px;height:17px;background:#dfe2f1"></div>
<div class="bx plus" style="left:16px;top:4px"></div>
<div class="mt" id="m9" style="left:31px;letter-spacing:0.78px"><span style="letter-spacing:1.3px">伺服放大器</span>(MELSERVO-J4<span style="letter-spacing:1.3px">系列</span>)</div>
</div>
<div class="mrow" style="top:170px">
<div class="a" style="left:0;top:0;width:15px;height:17px;background:#dfe2f1"></div>
<div class="bx plus" style="left:16px;top:4px"></div>
<div class="mt" id="m10" style="left:31px;letter-spacing:0.45px"><span style="letter-spacing:1.3px">通用</span>AC<span style="letter-spacing:1.3px">伺服</span></div>
</div>
<div class="mrow" style="top:187px">
<div class="bx " style="left:2px;top:4px"></div>
<div class="mt" id="m11" style="left:17px;letter-spacing:0.55px"><span style="letter-spacing:1.3px">以太网设备</span>(COGNEX)</div>
</div>
<div class="mrow" style="top:204px">
<div class="a" style="left:0;top:0;width:15px;height:17px;background:#dfe2f1"></div>
<div class="bx plus" style="left:16px;top:4px"></div>
<div class="mt" id="m12" style="left:31px;letter-spacing:0.5px">COGNEX Vision System</div>
</div>
<div class="mrow" style="top:221px">
<div class="bx " style="left:2px;top:4px"></div>
<div class="mt" id="m13" style="left:17px;letter-spacing:0.5px"><span style="letter-spacing:1.3px">以太网设备</span>(Panasonic Industrial Devices SUNX)</div>
</div>
<div class="mrow" style="top:238px">
<div class="a" style="left:0;top:0;width:15px;height:17px;background:#dfe2f1"></div>
<div class="bx plus" style="left:16px;top:4px"></div>
<div class="mt" id="m14" style="left:31px;letter-spacing:0.45px"><span style="letter-spacing:1.3px">激光位移传感器</span></div>
</div>
</div>
<div class="a" style="left:961px;top:444px;width:249px;height:73px;background:#f0f0f0;border-left:2px solid #8a8a8a;border-top:2px solid #8a8a8a"></div>
</div>
</div></body></html>
